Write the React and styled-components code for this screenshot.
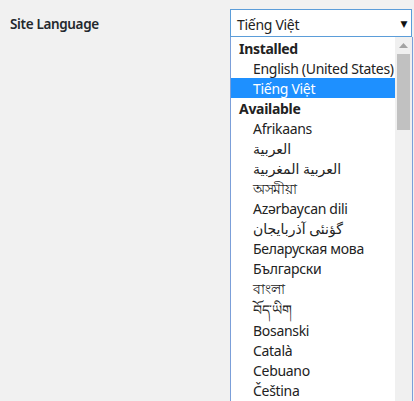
import React from "react";
import styled, { createGlobalStyle } from "styled-components";

const GlobalStyle = createGlobalStyle`
  html, body {
    margin: 0;
    padding: 0;
    background: #f1f1f1;
  }
  body {
    font-family: "Noto Sans", "DejaVu Sans", sans-serif;
    color: #23282d;
    overflow: hidden;
  }
`;

const Page = styled.div`
  width: 414px;
  height: 401px;
  display: flex;
  align-items: flex-start;
  padding: 9px 0 0 10px;
  box-sizing: border-box;
  overflow: hidden;
`;

const Label = styled.label`
  width: 220px;
  flex-shrink: 0;
  font-size: 13.5px;
  letter-spacing: -0.35px;
  font-weight: 600;
  line-height: 30px;
  color: #23282d;
`;

const Field = styled.div`
  position: relative;
  width: 182px;
`;

const SelectBox = styled.div`
  height: 28px;
  box-sizing: border-box;
  border: 1px solid #5b9dd9;
  background: #fff;
  display: flex;
  align-items: center;
  justify-content: space-between;
  padding: 2px 4px 0 6px;
  font-size: 14px;
  letter-spacing: -0.3px;
  color: #222;
`;

const Arrow = styled.span`
  font-size: 9px;
  color: #111;
  padding-bottom: 2px;
`;

const ListBox = styled.div`
  position: absolute;
  top: 28px;
  left: 0;
  width: 183px;
  height: 380px;
  box-sizing: border-box;
  border: 1px solid #7b9fd9;
  border-top: none;
  background: #fff;
  display: flex;
`;

const Options = styled.ul`
  list-style: none;
  margin: 0;
  padding: 1px 0 0;
  flex: 1;
  min-width: 0;
`;

const Row = styled.li`
  height: ${p => (p.tall ? 22 : 20)}px;
  line-height: ${p => (p.tall ? 22 : 20)}px;
  padding-top: 1px;
  box-sizing: border-box;
  font-size: 14px;
  letter-spacing: -0.3px;
  white-space: nowrap;
  padding-left: ${p => (p.group ? 8 : 22)}px;
  font-weight: ${p => (p.group ? 700 : 400)};
  background: ${p => (p.selected ? "#1e90ff" : "transparent")};
  color: ${p => (p.selected ? "#fff" : "#222")};
`;

const Scrollbar = styled.div`
  width: 17px;
  flex-shrink: 0;
  background: #f0f0f0;
  display: flex;
  flex-direction: column;
  align-items: center;
`;

const ScrollUp = styled.div`
  height: 17px;
  display: flex;
  align-items: center;
  justify-content: center;
`;

const Thumb = styled.div`
  width: 13px;
  height: 76px;
  background: #c1c1c1;
`;

const rows = [
  { text: "Installed", group: true },
  { text: "English (United States)" },
  { text: "Tiếng Việt", selected: true },
  { text: "Available", group: true },
  { text: "Afrikaans" },
  { text: "العربية" },
  { text: "العربية المغربية" },
  { text: "অসমীয়া" },
  { text: "Azərbaycan dili" },
  { text: "گؤنئی آذربایجان" },
  { text: "Беларуская мова" },
  { text: "Български" },
  { text: "বাংলা" },
  { text: "བོད་ཡིག", tall: true },
  { text: "Bosanski" },
  { text: "Català" },
  { text: "Cebuano" },
  { text: "Čeština" },
];

export default function App() {
  return (
    <>
      <GlobalStyle />
      <Page>
        <Label>Site Language</Label>
        <Field>
          <SelectBox>
            <span>Tiếng Việt</span>
            <Arrow>▼</Arrow>
          </SelectBox>
          <ListBox>
            <Options>
              {rows.map(r => (
                <Row key={r.text} group={r.group} selected={r.selected} tall={r.tall}>
                  {r.text}
                </Row>
              ))}
            </Options>
            <Scrollbar>
              <ScrollUp>
                <svg width="9" height="5" viewBox="0 0 9 5">
                  <path d="M0 5 L4.5 0 L9 5 Z" fill="#a3a3a3" />
                </svg>
              </ScrollUp>
              <Thumb />
            </Scrollbar>
          </ListBox>
        </Field>
      </Page>
    </>
  );
}
